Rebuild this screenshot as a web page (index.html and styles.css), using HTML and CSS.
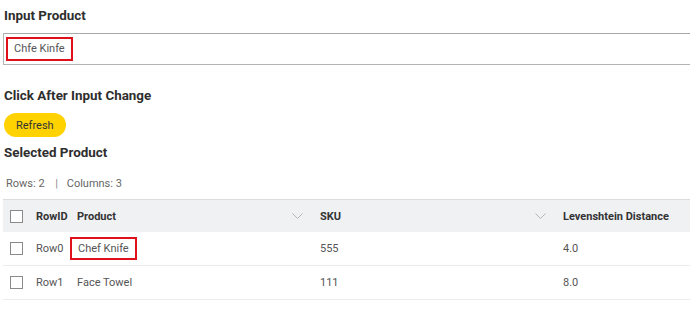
FILE: index.html
```html
<!DOCTYPE html>
<html lang="en">
<head>
  <meta charset="UTF-8">
  <meta name="viewport" content="width=device-width, initial-scale=1.0">
  <title>Product Matcher</title>
  <link rel="stylesheet" href="styles.css">
</head>
<body>
  <div class="page">
    <h2 class="section-title">Input Product</h2>
    <div class="text-input">
      <span class="mark">Chfe Kinfe</span>
    </div>

    <h2 class="section-title title-gap">Click After Input Change</h2>
    <button class="refresh-btn">Refresh</button>

    <h2 class="section-title title-small-gap">Selected Product</h2>
    <div class="table-info">Rows: 2 <span class="sep">|</span> Columns: 3</div>

    <div class="grid">
      <div class="grid-row grid-head">
        <div class="cell cell-check"><span class="checkbox"></span></div>
        <div class="cell">RowID</div>
        <div class="cell cell-sort">Product
          <svg class="chevron" width="11" height="6" viewBox="0 0 11 6"><polyline points="0.5,0.5 5.5,5.5 10.5,0.5" fill="none" stroke="#b5b5b5" stroke-width="1"/></svg>
        </div>
        <div class="cell cell-sort">SKU
          <svg class="chevron" width="11" height="6" viewBox="0 0 11 6"><polyline points="0.5,0.5 5.5,5.5 10.5,0.5" fill="none" stroke="#b5b5b5" stroke-width="1"/></svg>
        </div>
        <div class="cell">Levenshtein Distance</div>
      </div>
      <div class="grid-row">
        <div class="cell cell-check"><span class="checkbox"></span></div>
        <div class="cell">Row0</div>
        <div class="cell"><span class="mark mark-cell">Chef Knife</span></div>
        <div class="cell">555</div>
        <div class="cell">4.0</div>
      </div>
      <div class="grid-row">
        <div class="cell cell-check"><span class="checkbox"></span></div>
        <div class="cell">Row1</div>
        <div class="cell">Face Towel</div>
        <div class="cell">111</div>
        <div class="cell">8.0</div>
      </div>
    </div>
  </div>
</body>
</html>
```

FILE: styles.css
```css
body {
  margin: 0;
  background-color: #fff;
  font-family: Roboto, "Liberation Sans", sans-serif;
  color: #333;
  overflow: hidden;
}

.page {
  width: 730px;
  padding: 8px 0 0 3px;
}

.section-title {
  margin: 0 0 9px 1px;
  font-size: 13.4px;
  line-height: 16px;
  font-weight: 700;
  color: #2e2e2e;
}

.title-gap {
  margin-top: 23px;
}

.title-small-gap {
  margin-top: 8px;
}

.text-input {
  height: 24px;
  padding: 3px 2px;
  border: 1px solid #b4b4b4;
  border-top-color: #a8a8a8;
  display: flex;
  align-items: center;
}

.mark {
  display: inline-block;
  border: 2px solid #e0101b;
  padding: 0 6px;
  height: 20px;
  line-height: 20px;
  font-size: 11px;
  color: #555;
}

.refresh-btn {
  display: block;
  margin-left: 1px;
  height: 24px;
  padding: 0 12px;
  border: none;
  border-radius: 12px;
  background-color: #ffd200;
  font-family: Roboto, "Liberation Sans", sans-serif;
  font-size: 11px;
  color: #333;
}

.table-info {
  margin: 16px 0 8px 3px;
  font-size: 11px;
  line-height: 14px;
  color: #666;
}

.sep {
  margin: 0 6px 0 8px;
  color: #888;
}

.grid {
  border-top: 1px solid #dcdcdc;
}

.grid-row {
  display: grid;
  grid-template-columns: 33px 41px 243px 243px 1fr;
  height: 33px;
  border-bottom: 1px solid #ececec;
  font-size: 11px;
  color: #555;
}

.grid-head {
  height: 32px;
  background-color: #f0f1f3;
  border-bottom: none;
  font-weight: 700;
  color: #333;
}

.cell {
  display: flex;
  align-items: center;
  white-space: nowrap;
}

.cell-check {
  padding-left: 7px;
}

.cell-sort {
  justify-content: space-between;
  padding-right: 17px;
}

.checkbox {
  width: 11px;
  height: 11px;
  border: 1px solid #8a8a8a;
  background-color: #fff;
}

.mark-cell {
  margin-left: -7px;
  height: 19px;
  line-height: 19px;
}
```
